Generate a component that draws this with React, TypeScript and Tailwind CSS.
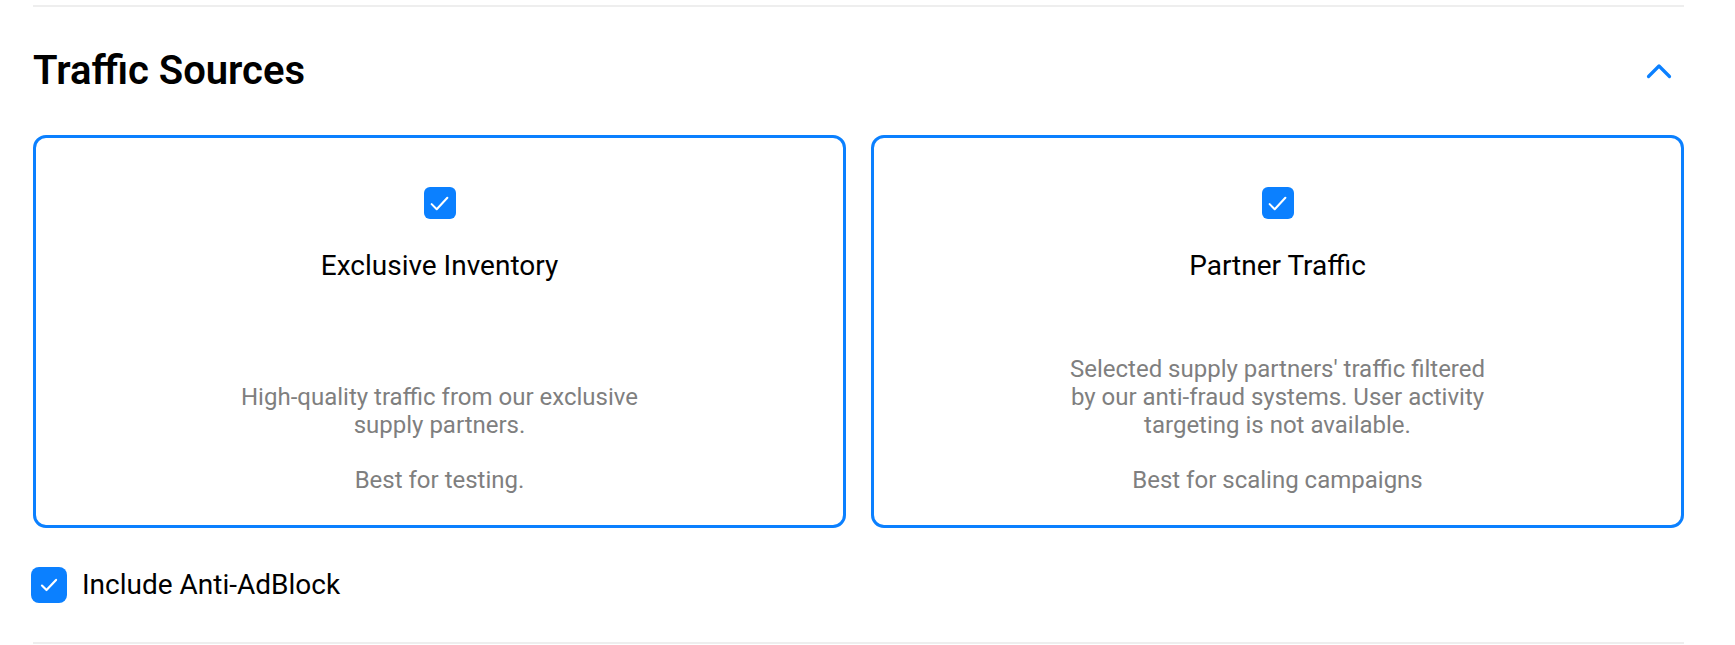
import React from "react";

const BLUE = "#0b80ff";

function Check({ size, sw = 2 }: { size: number; sw?: number }) {
  return (
    <svg width={size} height={size} viewBox="0 0 24 24" fill="none">
      <path d="M5.5 12.5l4.2 4.2 8.8-9.4" stroke="white" strokeWidth={sw} strokeLinecap="round" strokeLinejoin="round" />
    </svg>
  );
}

function Card({ title, lines, best }: { title: string; lines: string; best: string }) {
  return (
    <div className="h-[393px] rounded-[13px] border-[3px] border-[#0b80ff] flex flex-col items-center pt-[49px] pb-[31px]">
      <div className="w-[32px] h-[32px] rounded-[6px] bg-[#0b80ff] flex items-center justify-center">
        <Check size={29} sw={1.7} />
      </div>
      <div className="mt-[30px] text-[28px] leading-[34px] text-black">{title}</div>
      <div className="mt-auto max-w-[425px] text-center text-[24px] leading-[28px] text-[#7f7f7f]">
        <p>{lines}</p>
        <p className="mt-[27px]">{best}</p>
      </div>
    </div>
  );
}

export default function App() {
  return (
    <div className="w-[1735px] h-[645px] bg-white pt-[5px] pl-[33px] pr-[51px] overflow-hidden" style={{ fontFamily: "Roboto, 'Noto Sans', sans-serif" }}>
      <div className="h-[2px] bg-[#eeeeee]" />
      <div className="mt-[41px] flex items-center justify-between">
        <h2 className="text-[40px] leading-[46px] font-semibold text-black">Traffic Sources</h2>
        <svg className="mr-[12px]" width="26" height="16" viewBox="0 0 26 16" fill="none">
          <polyline points="2.5,13.5 13,3 23.5,13.5" stroke={BLUE} strokeWidth={3.2} strokeLinecap="round" strokeLinejoin="round" />
        </svg>
      </div>
      <div className="mt-[41px] grid grid-cols-2 gap-[25px]">
        <Card
          title="Exclusive Inventory"
          lines="High-quality traffic from our exclusive supply partners."
          best="Best for testing."
        />
        <Card
          title="Partner Traffic"
          lines="Selected supply partners' traffic filtered by our anti-fraud systems. User activity targeting is not available."
          best="Best for scaling campaigns"
        />
      </div>
      <div className="mt-[39px] flex items-center gap-[15px] -ml-[2px]">
        <div className="w-[36px] h-[36px] rounded-[8px] bg-[#0b80ff] flex items-center justify-center">
          <Check size={26} sw={2} />
        </div>
        <span className="text-[28px] leading-[34px] text-black">Include Anti-AdBlock</span>
      </div>
      <div className="mt-[39px] h-[2px] bg-[#eeeeee]" />
    </div>
  );
}
